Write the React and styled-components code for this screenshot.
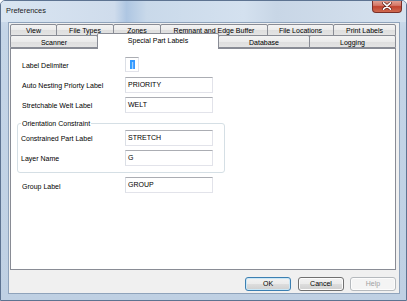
import React from "react";
import styled, { createGlobalStyle } from "styled-components";

const Global = createGlobalStyle`
  html, body { margin: 0; padding: 0; background: #ffffff; }
  body { font-family: "Liberation Sans", Arial, sans-serif; }
  * { box-sizing: border-box; }
`;

const Window = styled.div`
  width: 407px;
  height: 301px;
  display: flex;
  flex-direction: column;
  background: linear-gradient(180deg, #d3e0ee 0%, #c4d5e7 10%, #bfd0e3 100%);
  border: 1px solid #5d7391;
  border-radius: 5px 5px 0 0;
  overflow: hidden;
`;

const TitleBar = styled.div`
  height: 21px;
  display: flex;
  align-items: flex-start;
  justify-content: space-between;
  background: linear-gradient(90deg, #d9e5f1 0%, #cfdcec 28%, #aec6e2 31%, #c9d9ea 36%, #d4e1ef 60%, #c8d6e6 68%, #d6e2ef 100%);
`;

const Title = styled.span`
  font-size: 7.4px;
  line-height: 9px;
  color: #1b1b1b;
  margin: 5px 0 0 5px;
`;

const CloseButton = styled.div`
  width: 30px;
  height: 13px;
  margin: -1px 4px 0 0;
  border: 1px solid #7a2f28;
  border-top: none;
  border-radius: 0 0 4px 4px;
  background: linear-gradient(180deg, #e5a89a 0%, #d47767 45%, #c1432f 55%, #cf6a50 100%);
  display: flex;
  align-items: center;
  justify-content: center;
`;

const Client = styled.div`
  flex: 1;
  margin: 0 6px 6px 7px;
  background: #f0f0f0;
  border: 1px solid #8fa3bb;
  padding: 2px 3px 2px 1px;
  display: flex;
  flex-direction: column;
`;

const TabStrip = styled.div`
  display: flex;
  flex-direction: column;
  height: 23px;
`;

const TabRow = styled.div`
  display: flex;
  align-items: flex-end;
  height: ${(p) => p.h}px;
`;

const Tab = styled.div`
  width: ${(p) => p.w}px;
  height: ${(p) => (p.selected ? 16 : p.h)}px;
  margin-bottom: ${(p) => (p.selected ? -1 : 0)}px;
  margin-left: ${(p) => (p.first ? 0 : -1)}px;
  flex: none;
  position: relative;
  z-index: ${(p) => (p.selected ? 2 : 0)};
  border: 1px solid #898c95;
  border-bottom: ${(p) => (p.selected ? "none" : "1px solid #898c95")};
  border-radius: 2px 2px 0 0;
  background: ${(p) =>
    p.selected ? "#ffffff" : "linear-gradient(180deg, #f3f3f3 0%, #ebebeb 50%, #dedede 51%, #e4e4e4 100%)"};
  font-size: 7px;
  line-height: 8px;
  color: #000;
  text-align: center;
  padding-top: ${(p) => (p.selected ? 3 : p.pad)}px;
  white-space: nowrap;
  overflow: hidden;
`;

const Panel = styled.div`
  height: 222px;
  background: #ffffff;
  border: 1px solid #898c95;
  padding: 8px 0 0 11px;
  display: flex;
  flex-direction: column;
  position: relative;
  z-index: 1;
`;

const FieldRow = styled.div`
  display: grid;
  grid-template-columns: ${(p) => p.labelW}px auto;
  align-items: center;
  margin-top: ${(p) => p.mt}px;
`;

const Label = styled.span`
  font-size: 7px;
  line-height: 9px;
  color: #000;
  padding-top: ${(p) => p.dy || 0}px;
`;

const TextBox = styled.div`
  width: ${(p) => p.w}px;
  height: ${(p) => p.h}px;
  background: #ffffff;
  border: 1px solid #e2e3ea;
  border-top-color: #abadb3;
  border-left-color: #dbdfe6;
  font-size: 7px;
  line-height: 9px;
  color: #000;
  padding: 2px 0 0 2px;
`;

const Selection = styled.span`
  display: inline-block;
  width: 5px;
  height: 9px;
  margin-left: 2px;
  background: #3399ff;
  color: #ffffff;
  font-size: 7px;
  line-height: 9px;
  text-align: center;
`;

const GroupBox = styled.div`
  position: relative;
  width: 208px;
  margin: 10px 0 0 -5px;
  padding: 6px 0 6px 3px;
  border: 1px solid #d5dfe5;
  border-radius: 3px;
  display: flex;
  flex-direction: column;
`;

const Legend = styled.span`
  position: absolute;
  top: -5px;
  left: 3px;
  padding: 0 1px;
  background: #ffffff;
  font-size: 7px;
  line-height: 9px;
  color: #000;
`;

const ButtonRow = styled.div`
  display: flex;
  justify-content: flex-end;
  gap: 6px;
  margin-top: 7px;
`;

const Button = styled.div`
  width: 46px;
  height: 14px;
  border: 1px solid ${(p) => (p.isDefault ? "#3c7fb1" : p.disabled ? "#b5b9bd" : "#707070")};
  border-radius: 3px;
  background: ${(p) =>
    p.disabled
      ? "#f4f4f4"
      : "linear-gradient(180deg, #f2f2f2 0%, #ebebeb 50%, #dddddd 51%, #cfcfcf 100%)"};
  box-shadow: ${(p) => (p.isDefault ? "inset 0 0 0 1px #c9e7f7" : "inset 0 0 0 1px #fcfcfc")};
  font-size: 7px;
  line-height: 12px;
  text-align: center;
  color: ${(p) => (p.disabled ? "#a0a0a0" : "#000")};
  margin-left: ${(p) => p.ml || 0}px;
`;

const row1 = [
  ["View", 47],
  ["File Types", 58],
  ["Zones", 48],
  ["Remnant and Edge Buffer", 108],
  ["File Locations", 67],
  ["Print Labels", 63],
];

const row2 = [
  ["Scanner", 88],
  ["Special Part Labels", 122],
  ["Database", 92],
  ["Logging", 87],
];

function CloseGlyph() {
  return (
    <svg width="10" height="8" viewBox="0 0 10 8">
      <path d="M1.5 0.8 L8.5 7.2 M8.5 0.8 L1.5 7.2" stroke="#5a2019" strokeWidth="3" strokeLinecap="round" />
      <path d="M1.5 0.8 L8.5 7.2 M8.5 0.8 L1.5 7.2" stroke="#ffffff" strokeWidth="1.6" strokeLinecap="round" />
    </svg>
  );
}

export default function App() {
  return (
    <>
      <Global />
      <Window>
        <TitleBar>
          <Title>Preferences</Title>
          <CloseButton>
            <CloseGlyph />
          </CloseButton>
        </TitleBar>
        <Client>
          <TabStrip>
            <TabRow h={11}>
              {row1.map(([t, w], i) => (
                <Tab key={t} w={w} h={12} pad={2} first={i === 0}>
                  {t}
                </Tab>
              ))}
            </TabRow>
            <TabRow h={12}>
              {row2.map(([t, w], i) => (
                <Tab key={t} w={w} h={13} pad={3} first={i === 0} selected={i === 1}>
                  {t}
                </Tab>
              ))}
            </TabRow>
          </TabStrip>
          <Panel>
            <FieldRow labelW={103} mt={0}>
              <Label dy={1}>Label Delimiter</Label>
              <TextBox w={14} h={15}>
                <Selection>|</Selection>
              </TextBox>
            </FieldRow>
            <FieldRow labelW={103} mt={5}>
              <Label dy={1}>Auto Nesting Priorty Label</Label>
              <TextBox w={88} h={16}>PRIORITY</TextBox>
            </FieldRow>
            <FieldRow labelW={103} mt={4}>
              <Label dy={1}>Stretchable Welt Label</Label>
              <TextBox w={88} h={16}>WELT</TextBox>
            </FieldRow>
            <GroupBox>
              <Legend>Orientation Constraint</Legend>
              <FieldRow labelW={104} mt={0}>
                <Label>Constrained Part Label</Label>
                <TextBox w={88} h={16}>STRETCH</TextBox>
              </FieldRow>
              <FieldRow labelW={104} mt={4}>
                <Label>Layer Name</Label>
                <TextBox w={88} h={16}>G</TextBox>
              </FieldRow>
            </GroupBox>
            <FieldRow labelW={103} mt={4}>
              <Label dy={3}>Group Label</Label>
              <TextBox w={88} h={16}>GROUP</TextBox>
            </FieldRow>
          </Panel>
          <ButtonRow>
            <Button isDefault>OK</Button>
            <Button ml={1}>Cancel</Button>
            <Button disabled>Help</Button>
          </ButtonRow>
        </Client>
      </Window>
    </>
  );
}
